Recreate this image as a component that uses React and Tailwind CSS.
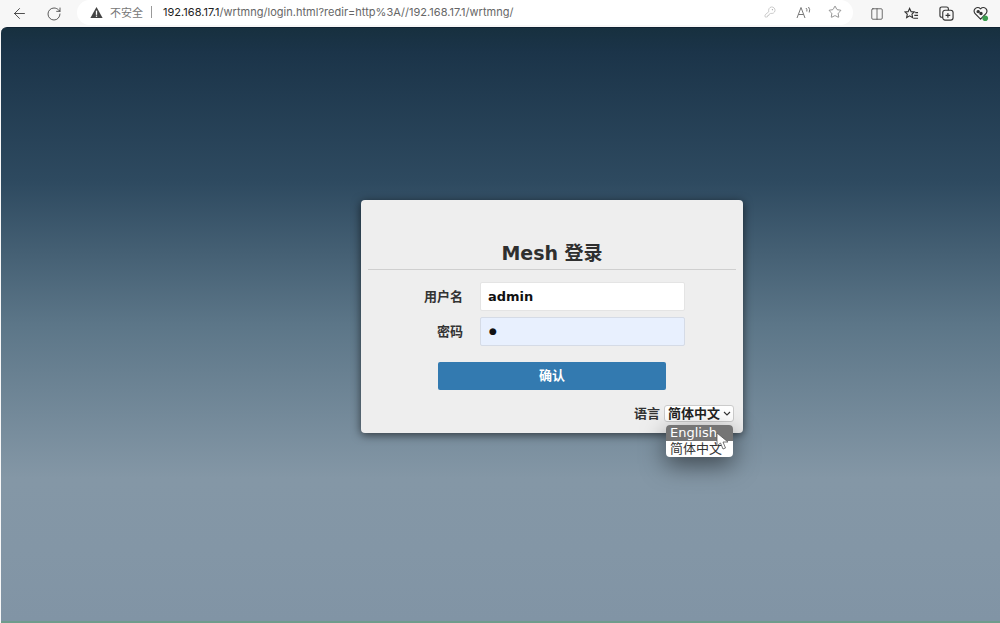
import React from 'react';
import { ArrowLeft, RotateCw, Star, KeyRound, Columns2 } from 'lucide-react';

const cjk = 'font-["DejaVu_Sans","Noto_Sans_CJK_SC",sans-serif]';

function Toolbar() {
  return (
    <div className="h-[27px] bg-[#f7f7f7] flex items-center shrink-0 relative">
      <div className="w-[77px] flex items-center shrink-0">
        <ArrowLeft size={17} strokeWidth={1.2} className="ml-[11px] text-[#333]" />
        <RotateCw size={16} strokeWidth={1.2} className="ml-[18px] text-[#333]" />
      </div>
      <div className="w-[776px] h-[25px] -mt-[3px] bg-white rounded-r-[13px] rounded-l-[13px] flex items-center shrink-0">
        <svg width="13" height="13" viewBox="0 0 14 13" className="ml-[13px] shrink-0">
          <path d="M7 0.5 L13.6 12.5 L0.4 12.5 Z" fill="#444" />
          <rect x="6.3" y="4.5" width="1.4" height="4.5" fill="#fff" />
          <rect x="6.3" y="9.8" width="1.4" height="1.4" fill="#fff" />
        </svg>
        <span className='ml-[7px] text-[11px] text-[#777] font-["Noto_Sans_CJK_SC",sans-serif]'>不安全</span>
        <span className="ml-[8px] w-px h-[12px] bg-[#999]" />
        <span className='ml-[11px] text-[11px] font-["Inter",sans-serif] text-[#666] whitespace-nowrap tracking-[0.02px]'>
          <span className="text-[#222]">192.168.17.1</span>/wrtmng/login.html?redir=http%3A//192.168.17.1/wrtmng/
        </span>
        <div className="ml-auto flex items-center pr-[11px] text-[#666]">
          <KeyRound size={12} strokeWidth={1} className="text-[#999] mr-[20px]" />
          <svg width="15" height="13" viewBox="0 0 15 13" fill="none" stroke="#777" strokeWidth="1" className="mr-[17px]">
            <path d="M1 12 L5 1.5 L9 12 M2.4 8.5 H7.6" />
            <path d="M10 2 Q11.5 3.5 10.8 5.5 M12.5 1 Q14.5 3.5 13.2 6.5" />
          </svg>
          <Star size={14} strokeWidth={1.2} />
        </div>
      </div>
      <div className="flex items-center text-[#444] ml-[17px] gap-[20px]">
        <Columns2 size={14} strokeWidth={1.3} />
        <svg width="15" height="14" viewBox="0 0 16 15" fill="none" stroke="#333" strokeWidth="1.2">
          <path d="M6 1.5 L7.6 5 L11 5.3 L8.5 7.7 L9.2 11.4 L6 9.5 L2.8 11.4 L3.5 7.7 L1 5.3 L4.4 5 Z" />
          <path d="M12 6h3M11 9h4M10 12h5" />
        </svg>
        <svg width="15" height="15" viewBox="0 0 16 16" fill="none" stroke="#333" strokeWidth="1.2">
          <rect x="4" y="4.5" width="11" height="10.5" rx="2.5" />
          <path d="M4 12 H3 Q1 12 1 10 V3 Q1 1 3 1 H8 Q10 1 10 3 V4.5" />
          <path d="M9.5 7.5v5M7 10h5" />
        </svg>
        <svg width="16" height="15" viewBox="0 0 17 16" fill="none" stroke="#333" strokeWidth="1.2" className="-ml-px">
          <path d="M8 14 L2 8 Q0 5 2.5 2.5 Q5.5 0.5 8 3 Q10.5 0.5 13.5 2.5 Q16 5 14 8 Z" />
          <circle cx="5.5" cy="6" r="1.2" fill="#333" />
          <circle cx="8.5" cy="8" r="1.2" fill="#333" />
          <circle cx="13" cy="13" r="3" fill="#3a9c4e" stroke="none" />
        </svg>
      </div>
    </div>
  );
}

function Field({ label, value, autofilled }) {
  return (
    <div className="flex items-center h-[29px]">
      <label className="w-[102px] text-right text-[13px] font-bold text-[#333]">{label}</label>
      <div
        className={`ml-[17px] w-[205px] h-[29px] rounded-[2px] border px-[7px] flex items-center text-[13px] font-bold text-[#111] ${
          autofilled ? 'bg-[#e8f0fe] border-[#d5dbe6]' : 'bg-white border-[#e4e4e4]'
        }`}
      >
        {value}
      </div>
    </div>
  );
}

function LoginCard() {
  return (
    <div className={`relative w-[382px] h-[233px] bg-[#eeeeee] rounded-[4px] shadow-[0_2px_10px_rgba(0,0,0,0.6)] pt-[37px] ${cjk}`}>
      <h1 className="text-[19px] leading-[32px] font-bold text-[#2f2f2f] text-center">Mesh 登录</h1>
      <div className="mx-[7px] h-px bg-[#cfcfcf]" />
      <div className="mt-[12px] flex flex-col gap-[6px]">
        <Field label="用户名" value="admin" />
        <Field label="密码" value={<span className="text-[9px] ml-[1px]">●</span>} autofilled />
      </div>
      <button className="block ml-[77px] mt-[16px] w-[228px] h-[28px] rounded-[2px] bg-[#337ab0] text-white text-[13px] font-bold">
        确认
      </button>
      <div className="mt-[14px] flex items-center justify-end pr-[9px]">
        <span className="text-[13px] font-bold text-[#333] mr-[4px]">语言</span>
        <div className="w-[70px] h-[17px] bg-white border border-[#ccc] rounded-[3px] flex items-center pl-[3px] text-[13px] font-bold text-[#222] whitespace-nowrap">
          简体中文
          <svg width="8" height="5" viewBox="0 0 8 5" fill="none" stroke="#333" strokeWidth="1.1" className="ml-[3px] shrink-0">
            <path d="M1 1 L4 4 L7 1" />
          </svg>
        </div>
      </div>
      <div className="absolute left-[305px] top-[225px] w-[67px] rounded-[4px] bg-white shadow-[0_8px_24px_rgba(0,0,0,0.5)] overflow-hidden text-[13px] leading-[16px] z-10">
        <div className='bg-[#757575] text-white pl-[4px] h-[16px] font-["DejaVu_Sans",sans-serif]'>English</div>
        <div className="text-[#333] pl-[4px] h-[16px] font-normal whitespace-nowrap">简体中文</div>
      </div>
      <svg width="16" height="20" viewBox="0 0 16 20" className="absolute left-[355px] top-[232px] z-20">
        <path d="M1 1 L1 14 L4.5 11 L7 17 L9.5 16 L7 10 L12 10 Z" fill="#fff" stroke="#555" strokeWidth="0.8" />
      </svg>
    </div>
  );
}

export default function App() {
  return (
    <div className="w-[1000px] h-[623px] overflow-hidden bg-[#f7f7f7] flex flex-col">
      <Toolbar />
      <main className="flex-1 ml-px rounded-tl-[6px] border-t border-[#0f2233] bg-[linear-gradient(180deg,#17303f_0%,#1b3449_4%,#2e4a60_26%,#5c7688_50%,#8497a6_76%,#8396a6_88%,#8194a5_100%)] border-b-2 border-b-[#6f9c8c] pl-[360px] pt-[172px]">
        <LoginCard />
      </main>
    </div>
  );
}
